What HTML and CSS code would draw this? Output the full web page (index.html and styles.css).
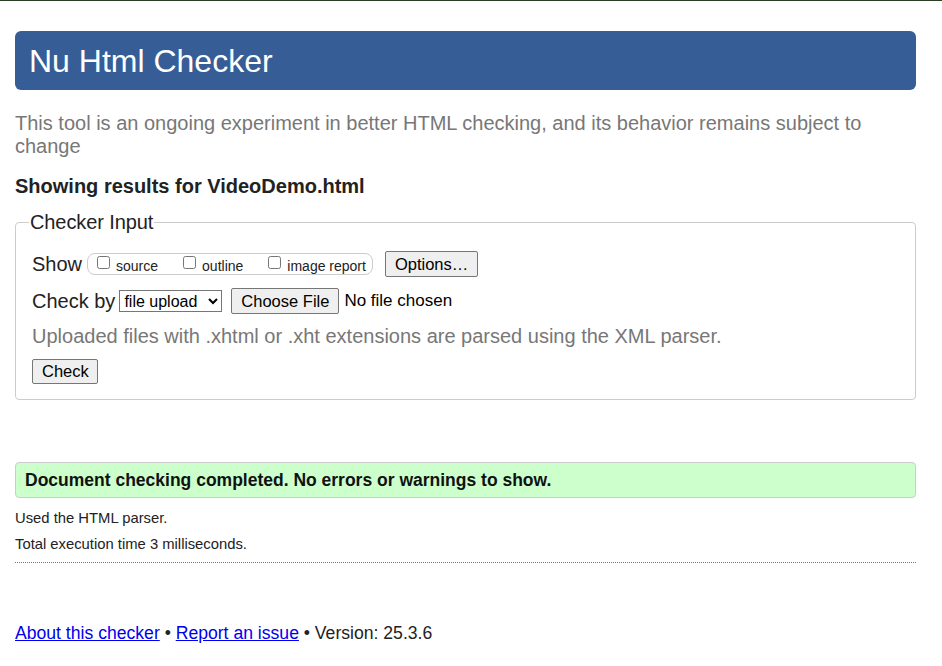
FILE: index.html
```html
<!DOCTYPE html>
<html lang="en">
<head>
<meta charset="utf-8">
<title>Showing results for VideoDemo.html - Nu Html Checker</title>
<link rel="stylesheet" href="styles.css">
</head>
<body>
<h1 class="title">Nu Html Checker</h1>
<p class="intro">This tool is an ongoing experiment in better HTML checking, and its behavior remains subject to change</p>
<p class="results-for">Showing results for VideoDemo.html</p>
<fieldset class="checker">
  <legend class="checker-legend">Checker Input</legend>
  <div class="row">
    <span class="row-label">Show</span>
    <span class="show-group">
      <label class="opt"><input type="checkbox" class="cb"><span>source</span></label>
      <label class="opt"><input type="checkbox" class="cb"><span>outline</span></label>
      <label class="opt"><input type="checkbox" class="cb"><span>image report</span></label>
    </span>
    <button type="button" class="btn btn-options">Options…</button>
  </div>
  <div class="row row-check">
    <span class="row-label">Check by</span>
    <select class="sel"><option>file upload</option></select>
    <button type="button" class="btn btn-file">Choose File</button>
    <span class="nofile">No file chosen</span>
  </div>
  <p class="hint">Uploaded files with .xhtml or .xht extensions are parsed using the XML parser.</p>
  <button type="button" class="btn btn-check">Check</button>
</fieldset>
<p class="success">Document checking completed. No errors or warnings to show.</p>
<p class="details">Used the HTML parser.</p>
<p class="details">Total execution time 3 milliseconds.</p>
<hr class="sep">
<p class="footer"><a href="#">About this checker</a> • <a href="#">Report an issue</a> • Version: 25.3.6</p>
</body>
</html>
```
FILE: styles.css
```css
html { background: #fff; }
body {
  margin: 0;
  padding: 30px 26px 20px 15px;
  border-top: 1px solid #2b3f24;
  font-family: "Liberation Sans", Arial, sans-serif;
  color: #222;
}
.title {
  margin: 0;
  height: 59px;
  line-height: 61px;
  padding: 0 14px;
  background: #365d96;
  color: #fff;
  font-size: 32px;
  font-weight: normal;
  border-radius: 6px;
}
.intro {
  margin: 22px 0 0;
  font-size: 20px;
  line-height: 23px;
  color: #777;
}
.results-for {
  margin: 16px 0 0;
  font-size: 20px;
  font-weight: bold;
  line-height: 24px;
}
.checker {
  margin: 13px 0 0;
  padding: 17px 16px 15px;
  border: 1px solid #ccc;
  border-radius: 4px;
}
.checker-legend {
  font-size: 20px;
  padding: 0 1px;
  margin-left: -3px;
  letter-spacing: -0.1px;
  color: #222;
}
.row {
  display: flex;
  align-items: center;
  height: 26px;
}
.row-check { margin-top: 11px; }
.row-label {
  font-size: 20px;
  margin-right: 5px;
  white-space: nowrap;
}
.show-group {
  display: flex;
  align-items: center;
  height: 20px;
  border: 1px solid #ccc;
  border-radius: 8px;
  padding: 0 6px 0 8px;
  margin-right: 12px;
}
.opt {
  display: flex;
  align-items: flex-start;
  font-size: 14px;
  margin-right: 24px;
  white-space: nowrap;
}
.opt:last-child { margin-right: 0; }
.opt span { padding-top: 3px; }
.cb {
  width: 13px;
  height: 13px;
  margin: 1px 6px 0 1px;
}
.btn {
  font-family: "Liberation Sans", Arial, sans-serif;
  font-size: 16.5px;
  color: #000;
  background: #efefef;
  border: 1px solid #767676;
  border-radius: 2px;
  padding: 0 9px;
  height: 26px;
  white-space: nowrap;
}
.btn-options { width: 93px; }
.sel {
  font-family: "Liberation Sans", Arial, sans-serif;
  font-size: 16px;
  height: 22px;
  width: 103px;
  margin: 0 9px 0 -1px;
  color: #000;
  background: #fff;
  border: 1px solid #767676;
  border-radius: 0;
}
.btn-file { width: 108px; padding: 0 4px; }
.nofile {
  font-size: 17px;
  margin-left: 5px;
  color: #000;
  white-space: nowrap;
}
.hint {
  margin: 11px 0 0;
  font-size: 20px;
  line-height: 23px;
  color: #777;
}
.btn-check {
  margin-top: 11px;
  height: 25px;
  width: 66px;
  display: block;
}
.success {
  margin: 62px 0 0;
  padding: 0 9px;
  height: 34px;
  line-height: 34px;
  background: #ccffcc;
  border: 1px solid #ccc;
  border-radius: 4px;
  font-size: 17.5px;
  font-weight: bold;
  color: #111;
}
.details {
  margin: 12px 0 0;
  font-size: 14.8px;
  line-height: 16px;
}
.details + .details { margin-top: 10px; }
.sep {
  margin: 10px 0 0;
  border: 0;
  border-top: 1px dotted #777;
  height: 0;
}
.footer {
  margin: 59px 0 0;
  font-size: 17.6px;
  line-height: 22px;
}
.footer a { color: #0000ee; }
```
